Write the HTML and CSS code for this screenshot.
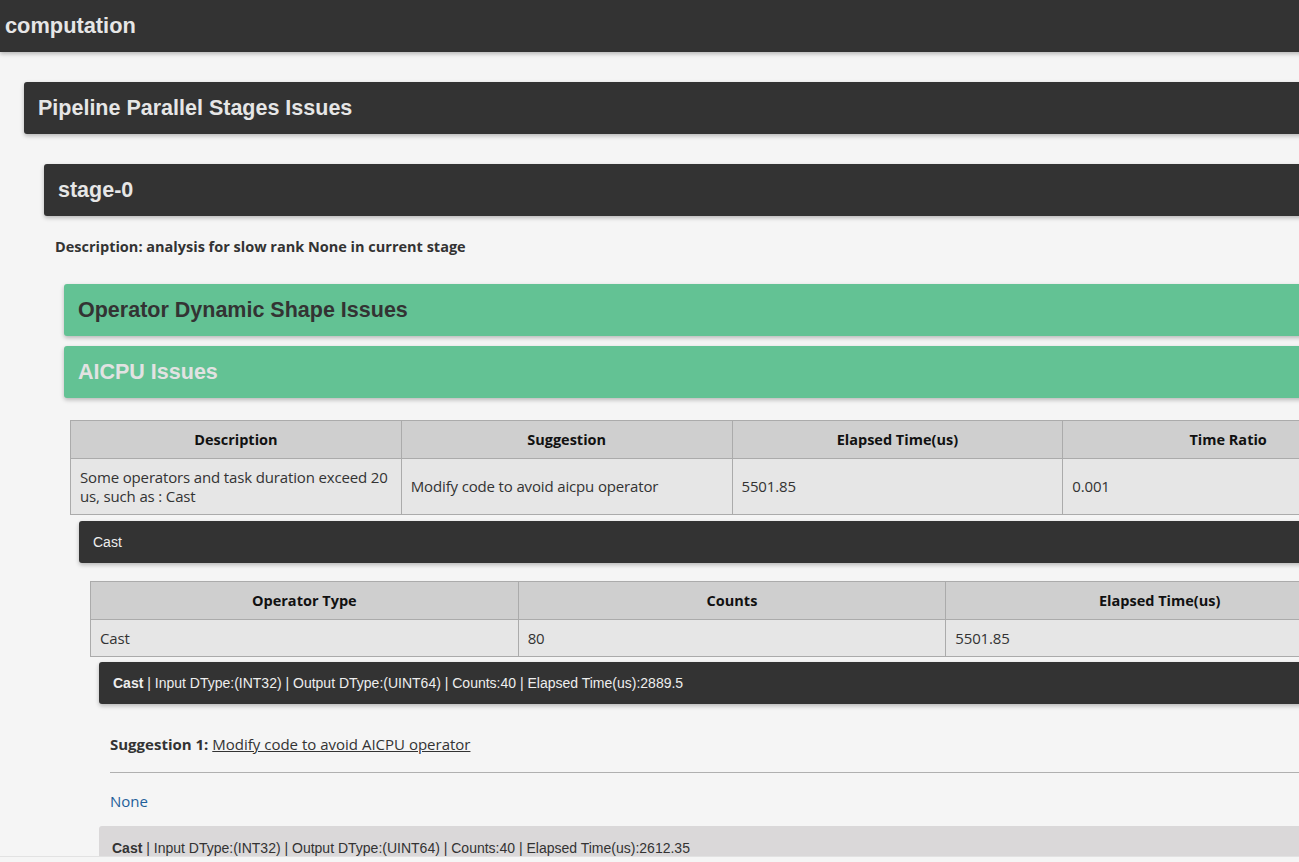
FILE: index.html
```html
<!DOCTYPE html>
<html>
<head>
<meta charset="utf-8">
<title>computation</title>
<link rel="stylesheet" href="styles.css">
</head>
<body>
<div class="page">
  <div class="topbar">computation</div>
  <div class="lvl1">
    <div class="box dark big">Pipeline Parallel Stages Issues</div>
    <div class="lvl2">
      <div class="box dark big">stage-0</div>
      <p class="desc">Description: analysis for slow rank None in current stage</p>
      <div class="lvl3">
        <div class="box green big">Operator Dynamic Shape Issues</div>
        <div class="box green big light gap10">AICPU Issues</div>
        <div class="inner">
          <table class="tbl t1">
            <thead>
              <tr><th>Description</th><th>Suggestion</th><th>Elapsed Time(us)</th><th>Time Ratio</th></tr>
            </thead>
            <tbody>
              <tr>
                <td>Some operators and task duration exceed 20 us, such as : Cast</td>
                <td>Modify code to avoid aicpu operator</td>
                <td>5501.85</td>
                <td>0.001</td>
              </tr>
            </tbody>
          </table>
          <div class="castwrap">
            <div class="bar">Cast</div>
            <div class="inner2">
              <table class="tbl t2">
                <thead>
                  <tr><th>Operator Type</th><th>Counts</th><th>Elapsed Time(us)</th></tr>
                </thead>
                <tbody>
                  <tr><td>Cast</td><td>80</td><td>5501.85</td></tr>
                </tbody>
              </table>
              <div class="detailwrap">
                <div class="bar"><b>Cast</b> | Input DType:(INT32) | Output DType:(UINT64) | Counts:40 | Elapsed Time(us):2889.5</div>
                <div class="sugg">
                  <p class="sugline"><b>Suggestion 1:</b> <a href="#">Modify code to avoid AICPU operator</a></p>
                  <div class="rule"></div>
                  <p class="none">None</p>
                </div>
                <div class="bar graybar"><b>Cast</b> | Input DType:(INT32) | Output DType:(UINT64) | Counts:40 | Elapsed Time(us):2612.35</div>
              </div>
            </div>
          </div>
        </div>
      </div>
    </div>
  </div>
</div>
<div class="bottomstrip"></div>
</body>
</html>
```

FILE: styles.css
```css
html, body {
  margin: 0;
  padding: 0;
  overflow: hidden;
  background: #f5f5f5;
}
body {
  height: 862px;
}
.page {
  width: 1464px;
  font-family: "Liberation Sans", Arial, sans-serif;
  color: #333;
}
.topbar {
  height: 52px;
  background: #333;
  color: #e6e6e6;
  font-size: 21.8px;
  font-weight: bold;
  line-height: 52px;
  padding-left: 5px;
  box-shadow: 0 2px 4px rgba(0,0,0,0.25);
}
.lvl1 {
  margin: 30px 24px 0 24px;
}
.lvl2 {
  margin: 30px 20px 0 20px;
}
.lvl3 {
  margin: 0 20px 0 20px;
}
.box {
  height: 52px;
  border-radius: 3px;
  padding-left: 14px;
  line-height: 52px;
  box-shadow: 0 2px 4px rgba(0,0,0,0.25);
}
.big {
  font-size: 21.5px;
  font-weight: bold;
}
.dark {
  background: #333;
  color: #e6e6e6;
}
.green {
  background: #63c294;
  color: #333;
}
.green.light {
  color: #e2e2e2;
}
.gap10 {
  margin-top: 10px;
}
.desc {
  margin: 0;
  padding: 22px 0 0 11px;
  height: 46px;
  font-family: "Open Sans", "Noto Sans", sans-serif;
  font-size: 14.5px;
  font-weight: bold;
  line-height: 17px;
  color: #333;
}
.inner {
  margin: 22px 6px 0 6px;
}
.tbl {
  width: 100%;
  border-collapse: collapse;
  table-layout: fixed;
  font-family: "Open Sans", "Noto Sans", sans-serif;
  font-size: 15px;
}
.tbl th {
  background: #cfcfcf;
  color: #111;
  font-size: 14.5px;
  font-weight: bold;
  height: 37px;
  padding: 0 10px;
  border: 1px solid #ababab;
  text-align: center;
}
.tbl td {
  background: #e6e6e6;
  color: #333;
  padding: 8px 8px 8px 9px;
  border: 1px solid #ababab;
  line-height: 19px;
  text-align: left;
  letter-spacing: -0.15px;
}
.t1 td {
  height: 39px;
}
.t2 td {
  height: 20px;
}
.castwrap {
  margin: 6px 9px 0 9px;
}
.bar {
  height: 42px;
  background: #333;
  color: #eee;
  border-radius: 3px;
  font-size: 14px;
  line-height: 42px;
  padding-left: 14px;
  box-shadow: 0 2px 4px rgba(0,0,0,0.25);
}
.inner2 {
  margin: 18px 11px 0 11px;
}
.detailwrap {
  margin: 5px 9px 0 9px;
}
.sugg {
  padding: 30px 0 0 11px;
}
.sugline {
  margin: 0;
  font-family: "Open Sans", "Noto Sans", sans-serif;
  font-size: 15px;
  line-height: 20px;
  color: #333;
}
.sugline a {
  color: #333;
  text-decoration: underline;
}
.rule {
  height: 1px;
  background: #b0b0b0;
  margin-top: 18px;
}
.none {
  margin: 0;
  padding-top: 18px;
  height: 35px;
  font-family: "Open Sans", "Noto Sans", sans-serif;
  font-size: 15px;
  line-height: 20px;
  color: #1f5f9a;
}
.graybar {
  background: #dad8d9;
  color: #333;
  box-shadow: none;
  border-radius: 3px 0 0 0;
  height: 44px;
  line-height: 44px;
  padding-left: 13px;
}
.bottomstrip {
  position: fixed;
  left: 0;
  right: 0;
  bottom: 0;
  height: 5px;
  background: #f5f5f5;
  border-top: 1px solid #e2e2e2;
}
```
